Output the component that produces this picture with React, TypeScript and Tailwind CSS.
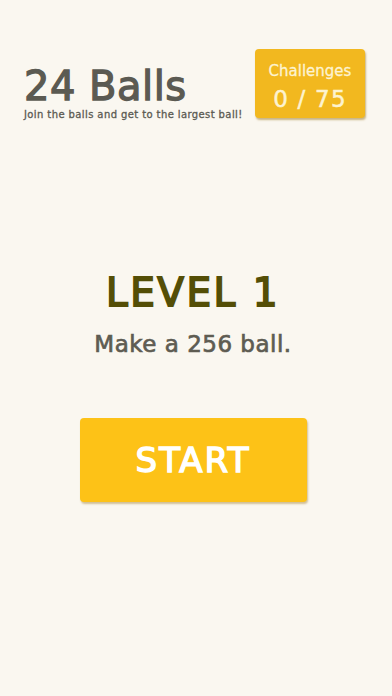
export default function App() {
  return (
    <div className="w-[392px] h-[696px] bg-[#faf7f0] flex flex-col font-['DejaVu_Sans',sans-serif] leading-none">
      {/* header */}
      <div className="h-[118px] shrink-0 flex items-start justify-between pl-6 pr-[27px] pt-[49px]">
        <div className="pt-[17px]">
          <h1 className="text-[40px] leading-none tracking-[0.5px] text-[#5b5a52] [-webkit-text-stroke:1.3px_#5b5a52]">24 Balls</h1>
          <p className="mt-[4px] text-[10px] leading-none tracking-[0.4px] text-[#5b5a52] [-webkit-text-stroke:0.3px_#5b5a52]">
            Join the balls and get to the largest ball!
          </p>
        </div>
        <div className="w-[110px] h-[69px] rounded-[4px] bg-[#f2b81f] shadow-[1px_2px_2px_rgba(160,125,40,0.55)] flex flex-col items-center pt-[15px] text-[#fdf3d0]">
          <span className="text-[15px] leading-none [-webkit-text-stroke:0.3px_#fdf3d0]">Challenges</span>
          <span className="mt-[9px] text-[23px] leading-none tracking-[1.2px] [-webkit-text-stroke:0.5px_#fdf3d0]">0 / 75</span>
        </div>
      </div>

      {/* level */}
      <div className="w-[386px] flex flex-col items-center mt-[155px]">
        <h2 className="text-[39px] leading-none tracking-[2.5px] text-[#544e06] [-webkit-text-stroke:1.8px_#544e06]">LEVEL 1</h2>
        <p className="mt-[21px] text-[23px] leading-none tracking-[0.5px] text-[#5e5c52] [-webkit-text-stroke:0.7px_#5e5c52]">Make a 256 ball.</p>
      </div>

      <div className="w-[386px] flex justify-center mt-[62px]">
        <button className="w-[227px] h-[84px] rounded-[4px] bg-[#fdc217] shadow-[1px_2px_2px_rgba(160,125,40,0.45)] flex items-center justify-center text-white text-[34px] leading-none tracking-[2px] [-webkit-text-stroke:1.4px_#ffffff]">
          START
        </button>
      </div>
    </div>
  );
}
